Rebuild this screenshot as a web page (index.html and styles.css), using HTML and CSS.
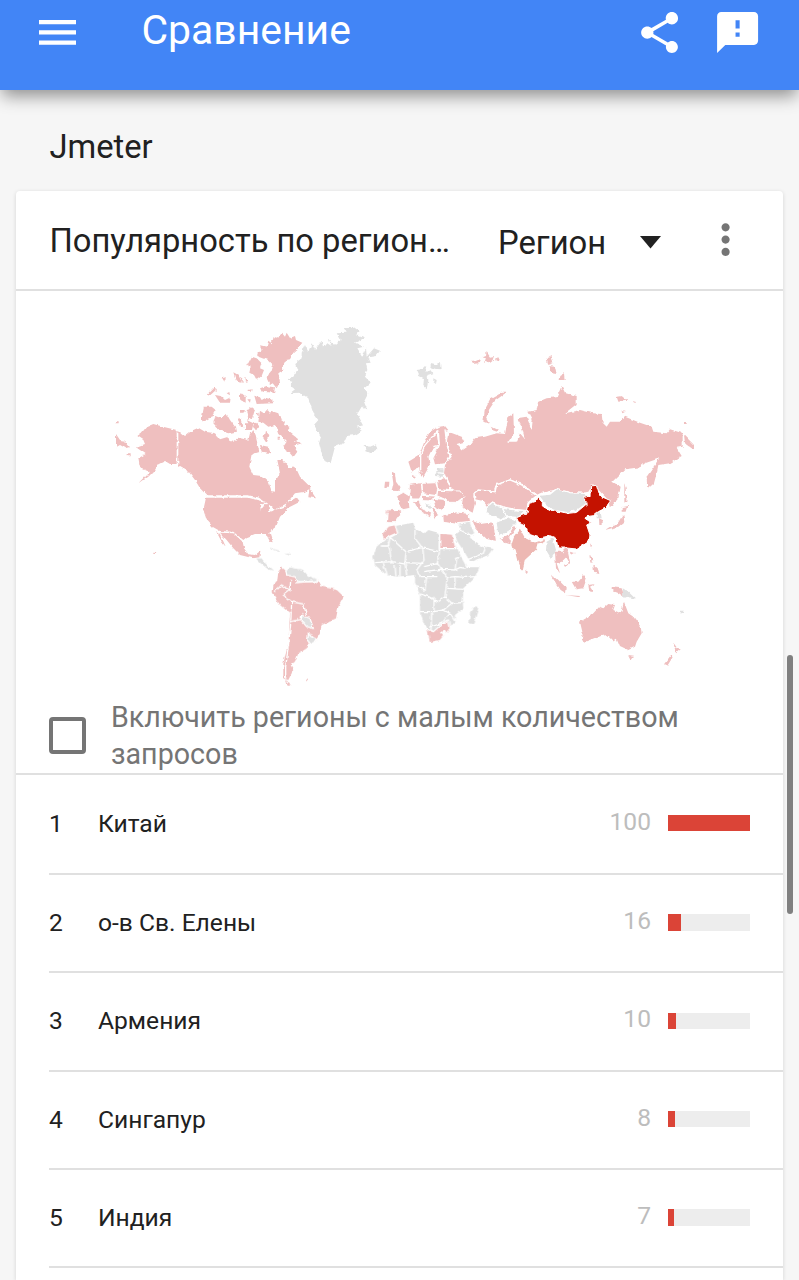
FILE: index.html
```html
<!DOCTYPE html>
<html lang="ru">
<head>
<meta charset="utf-8">
<title>Сравнение</title>
<link rel="stylesheet" href="styles.css">
</head>
<body>
<header class="appbar">
  <svg class="menu" viewBox="0 0 37 25"><path d="M0 0h37v4.2H0zM0 10.3h37v4.2H0zM0 20.6h37v4.2H0z"/></svg>
  <h1 class="title">Сравнение</h1>
  <svg class="action" viewBox="0 0 24 24"><path d="M18 16.08c-.76 0-1.44.3-1.96.77L8.91 12.7c.05-.23.09-.46.09-.7s-.04-.47-.09-.7l7.05-4.11c.54.5 1.25.81 2.04.81 1.66 0 3-1.34 3-3s-1.34-3-3-3-3 1.34-3 3c0 .24.04.47.09.7L8.04 9.81C7.5 9.31 6.79 9 6 9c-1.66 0-3 1.34-3 3s1.34 3 3 3c.79 0 1.5-.31 2.04-.81l7.12 4.16c-.05.21-.08.43-.08.65 0 1.61 1.31 2.92 2.92 2.92s2.92-1.31 2.92-2.92-1.31-2.92-2.92-2.92z"/></svg>
  <svg class="action feedback" viewBox="0 0 24 24"><path d="M20 2H4c-1.1 0-2 .9-2 2v18l4-4h14c1.1 0 2-.9 2-2V4c0-1.1-.9-2-2-2zm-7 8h-2V6h2v4zm0 4h-2v-2h2v2z"/></svg>
</header>
<main class="page">
  <h2 class="term">Jmeter</h2>
  <section class="card">
    <div class="card-head">
      <h3 class="card-title">Популярность по регион…</h3>
      <div class="select"><span>Регион</span><svg class="caret" viewBox="0 0 21 13"><path d="M0 0h21L10.500 12.500z"/></svg></div>
      <svg class="more" viewBox="0 0 24 24"><path d="M12 8c1.100 0 2-.9 2-2s-.9-2-2-2-2 .9-2 2 .9 2 2 2zm0 2c-1.100 0-2 .9-2 2s.9 2 2 2 2-.9 2-2-.9-2-2-2zm0 6c-1.100 0-2 .9-2 2s.9 2 2 2 2-.9 2-2-.9-2-2-2z"/></svg>
    </div>
    <svg class="map" viewBox="16 291 767 408">
      <defs><filter id="coast" x="0" y="0" width="100%" height="100%" color-interpolation-filters="sRGB"><feTurbulence type="fractalNoise" baseFrequency=".2" numOctaves="2" seed="4" result="n"/><feDisplacementMap in="SourceGraphic" in2="n" scale="3.500" xChannelSelector="R" yChannelSelector="G"/></filter></defs>
      <g filter="url(#coast)">
        <!-- North America -->
        <g class="low" transform="translate(100 310) scale(.33333)">
          <path d="M112 378L125 368 140 350 160 342 195 352 230 360V462L210 462 195 453 175 463 165 480 145 500 118 520 150 486 130 478 118 465 115 445 137 432 108 412 135 402 130 390zM48 372L60 390 75 392 90 412 78 415 60 405 48 412zM46 334h10v6h-10zM80 430h12v6h-12z"/>
          <path d="M235 362L255 378 275 362 295 353 315 365 345 370 360 388 385 380 390 400 415 383 445 390 450 370 465 370 472 400 478 425 455 432 448 470 460 495 485 498 505 515 515 543 525 545 525 515 540 490 532 450 550 450 570 475 585 468 600 500 625 525 632 535 615 545 585 550 560 580 590 562 600 575 575 588 550 600 560 580 525 600 505 582 480 563 445 556H320L300 535 285 510 262 480 235 465z"/>
          <path d="M318 563H445L480 572 498 575 480 583 483 605 492 583 505 582 508 605 550 592 575 582 560 600 540 620 528 650 508 665 518 697 510 695 498 672 465 672 440 682 430 690 415 678 400 665 360 663 340 652 320 630 310 600z"/>
          <path d="M360 668L400 670 428 695 432 715 445 733 465 735 482 722 478 742 460 745 420 735 400 715 380 690zM348 663L360 672 378 712 365 695z"/>
          <path d="M312 290L335 290 347 300 335 320 312 335 305 325zM345 318L365 325 380 312 390 330 405 350 408 365 385 370 360 362 340 340zM320 255L345 228 348 240 328 258zM345 255L362 258 375 270 392 262 390 278 360 278zM365 205L378 202 372 216zM400 187L415 195 425 215 408 212zM436 200L446 216 438 218zM420 250L437 260 432 275 420 268zM445 240L455 238 452 250zM442 268L452 268 450 278zM412 320L425 330 430 350 420 352zM440 300L462 295 460 315 445 315zM440 330L460 340 455 360zM420 300h14v8h-14z"/>
          <path d="M472 128L485 118 480 106 500 110 505 92 515 100 522 78 535 86 545 68 555 80 560 68 570 84 585 78 588 90 607 98 592 118 580 128 570 148 558 150 548 168 550 180 535 190 540 215 530 235 518 220 510 225 500 205 508 190 515 182 520 165 505 150 490 145 472 138zM455 140L470 145 485 160 480 175 492 180 485 198 470 210 462 195 448 188 452 170 442 165zM480 235L500 228 525 232 522 248 485 245zM463 257L480 262 485 270 500 262 517 265 518 280 470 282zM425 250L437 260 437 278 422 270zM420 200l10 5-3 12zM447 295L465 300 455 325 442 330zM480 302L492 310 500 300 510 312 512 302 535 310 540 325 555 335 552 345 572 350 562 362 575 372 592 385 582 392 605 400 580 408 592 425 580 442 570 430 560 425 550 410 560 395 550 385 535 372 525 345 505 350 490 338 475 335zM495 362L508 375 500 400 490 385zM480 405L505 410 512 430 485 425zM435 340h20v20h-20zM460 360L470 385 450 375zM463 335l12 14-6 12-10-10zM530 380h9v9h-9zM340 240l10-4v10zM380 250l8-4 2 10zM468 310l8-2v12z"/>
          <path d="M628 535L648 565 625 562zM160 728h6v4h-6z"/>
        </g>
        <!-- Greenland, Iceland and Svalbard -->
        <g class="none" transform="translate(240 310) scale(.33333)">
          <path d="M140 210L160 198 172 180 165 160 185 145 185 125 195 105 205 125 215 100 225 120 245 92 250 115 262 100 280 112 265 88 285 104 302 90 290 70 320 68 310 52 340 50 360 65 350 75 372 85 345 98 372 110 352 115 368 140 378 112 380 140 402 115 420 122 408 138 385 142 392 158 378 160 382 180 375 200 392 218 372 235 385 250 372 275 382 300 365 290 352 312 370 345 350 350 365 362 345 375 320 378 310 400 285 410 272 460 250 450 237 400 243 380 222 345 235 330 220 310 205 265 180 248 150 250 165 238 152 228 160 215z"/>
          <path d="M370 405L380 405 390 410 408 403 412 418 390 430 375 423 382 415z"/>
          <path d="M530 180L545 178 555 168 560 185 575 180 580 190 562 195 565 210 560 235 550 225 552 205 538 198zM572 162L585 165 600 156 602 178 585 176 572 172zM580 205l10 5-2 12-8-6z"/>
        </g>
        <!-- Caribbean and South America -->
        <g transform="translate(240 480) scale(.33333)">
          <path class="none" d="M48 235L65 235 80 255 100 272 85 268 60 248zM88 203L120 213 118 216 90 206zM132 220L150 222 148 226z"/>
          <path class="low" d="M125 262L138 272 200 290 235 300 245 320 290 330 312 350 295 380 288 415 245 435 240 460 225 485 205 490 200 505 175 520 165 545 152 555 160 570 145 600 130 595 130 550 145 490 150 400 120 375 98 340 100 315 112 300 115 275zM135 600L155 618 140 618zM198 596h6v4h-6z"/>
          <path class="none edge" d="M138 268L150 260 190 268 205 285 235 297 225 305 175 305 165 290 140 285zM185 405L210 415 220 445 200 440 183 420zM205 462L230 475 220 490 203 485z"/>
          <path class="line" d="M105 335L125 315 150 330 130 345 155 365 152 430 145 500 137 560 137 595M152 300L150 330M155 365L190 372 200 405M152 425L185 418M165 308L235 302"/>
        </g>
        <!-- Africa and Arabia -->
        <g transform="translate(360 480) scale(.33333)">
          <path class="none" d="M105 138L160 128 165 148 195 160 205 150 240 160 275 165 285 190 305 235 320 262 358 262 345 290 310 325 308 365 310 385 285 405 283 425 265 445 240 478 210 485 200 450 180 400 180 345 165 310 165 285 110 290 80 285 45 255 40 230 50 200 72 180 70 160 85 142zM348 378L355 385 340 432 328 430 330 400z"/>
          <path class="line" d="M62 198H85L90 172 138 215 185 203 238 215V160M85 185L95 245 45 248M112 160L90 172M165 150L165 175 188 205 192 240 170 270 180 290 235 290M138 218L135 248 190 250M95 245L135 252 140 285M70 250L82 285M105 255L108 290M120 255V290M240 206L232 250 245 268 285 270 290 235 302 232M192 260L235 250M192 275L245 268 262 292 285 290 320 292 345 290M285 270L300 262 320 265M262 292L255 350 235 365 205 350 180 342M200 290L195 330 170 320M262 325L310 328M222 350V395H180M222 395L250 390 275 370 308 368M255 350L275 370M250 390L270 400 285 425M215 400L213 450M215 440L245 430 270 400M285 290V325"/>
          <path class="low edge" d="M105 134L114 158 87 170 70 184 66 160 85 138zM239 159L277 162 288 206H239zM200 447L220 455 245 433 265 420 271 445 240 482 208 489z"/>
          <path class="white" d="M243 456l12-4 4 8-10 8z"/>
          <path class="none edge" d="M283 165L300 150 330 165 350 190 375 200 402 205 385 228 330 248 310 215 290 185zM292 133L330 125 345 160 335 167 305 152z"/>
          <path class="line" d="M325 238L370 220 378 200"/>
        </g>
        <!-- Europe and Russia -->
        <g transform="translate(370 330) scale(.33333)">
          <path class="low" d="M235 305L275 320 283 335 260 342 275 362 300 345 315 325 345 320 380 310 405 312 415 262 430 250 432 310 415 335 440 335 450 310 465 328 455 290 440 265 470 260 485 300 488 270 475 245 500 240 505 215 530 205 560 202 575 168 585 188 620 198 620 222 585 250 630 240 670 250 695 252 698 278 710 290 720 275 755 275 765 260 810 278 845 290 850 305 890 310 900 298 938 310V350L920 353 935 378 900 400 865 405 860 430 852 460 832 478 830 440 868 385 825 400 810 412 765 418 727 455 752 470 745 505 720 535 715 510 695 490 670 463 655 485 640 488 600 488 560 478 510 490 500 495 460 463 420 448 378 463 373 480 320 483 310 495 315 520 308 548 275 530 280 495 245 475 235 450 222 430 225 405 245 380 230 340z"/>
          <path class="low" d="M340 275L345 235 360 208 400 185 412 185 375 212 358 238 348 265 358 282zM365 290L385 300 375 305zM305 90L315 94 330 88 325 100 308 102zM335 82l10-4 2 8zM350 66L360 80 372 78 368 90 358 98 350 92 345 96zM375 86l10-4 4 8-10 6zM530 85L545 75 550 100 535 105zM535 108L555 110 560 132 545 130zM568 138L582 130 584 150 566 150zM740 200L755 198 772 212 745 215zM785 213L800 215 795 219zM755 240l10 3-8 4zM942 314L972 345 972 360 945 340zM942 276h8v6h-8z"/>
          <path class="low" d="M180 305L205 290 225 288 235 300 215 305 205 300 185 320 165 345 158 380 163 430 150 440 148 410 125 425 115 395 148 375 165 330zM185 320L200 310 205 345 185 360 175 380 180 405 160 440 155 430 150 380 165 345zM205 305L225 300 230 335 240 375 225 400 195 403 190 385 208 350z"/>
          <path class="line" d="M205 303L187 320 165 345 152 375 152 430M205 305L208 345 190 350M225 298L230 340 240 378"/>
          <path class="low" d="M65 425L75 430 78 455 92 475 85 483 65 482 70 460zM45 455L58 455 57 473 43 473zM128 435L137 438 132 448z"/>
          <path class="low rim" d="M48 540L90 538 92 555 75 578 50 578zM80 498L100 487 122 500 118 515 120 535 95 540 85 520zM118 463L154 458 157 490 148 507 123 507 117 485zM156 460L197 458 204 478 200 497 158 491zM200 453L225 443 241 470 230 481 203 479zM202 481L270 483 282 500 260 517 235 517 225 508 200 497zM188 505L222 508 227 525 215 542 195 532zM130 513L148 510 155 535 185 550 180 560 155 547 140 532zM155 496L197 498 187 513 158 512zM180 530L195 535 205 555 195 570 188 550zM218 555L260 546 297 550 302 577 255 582 220 577z"/>
          <path class="none" d="M202 415L220 415 222 440 195 438zM165 520l15 5 8 15-12-5z"/>
          <path class="line" d="M54 545L52 578M196 428L222 430"/>
        </g>
        <!-- Asia and Australia -->
        <g transform="translate(470 470) scale(.33333)">
          <path class="low edge" d="M12 70L25 60 75 65 80 45 120 30 155 45 200 77 175 98 170 122 135 118 95 110 65 98 50 110 38 95 15 90zM5 150L30 160 70 155 75 180 80 215 45 208 15 178zM85 205L115 195 130 165 142 172 120 205 130 228 105 220z"/>
          <path class="none rim" d="M48 112L65 100 95 112 110 140 95 150 45 130zM98 115L135 120 168 122 145 142 110 140zM78 157L115 143 142 155 115 188 85 197z"/>
          <path class="none edge" d="M205 76L240 72 260 56 300 68 345 70 357 95 320 122 290 128 245 120 225 102z"/>
          <path class="india edge" d="M125 235L122 225 132 195 150 172 165 200 195 215 228 205 225 218 205 222 200 240 167 270 160 300 153 300 145 280 135 240z"/>
          <path class="high rim" d="M140 143L170 130 178 100 195 95 202 81 217 97V108L240 122 270 125 295 130 320 127 352 100 340 83 360 78 362 48 380 46 390 78 422 92 405 115 385 125 370 137 350 140 345 145 364 158 350 165 360 195 350 217 320 237 290 234 264 234 258 205 240 197 210 204 175 192 165 165 145 155z"/>
          <path class="none" d="M230 215L248 205 258 240 243 265 228 240zM380 130L392 125 395 145 380 145z"/>
          <path class="low" d="M255 245L280 245 290 260 275 275 260 280 270 310 258 295zM280 235L292 238 300 275 285 295 282 285 295 275 283 255zM387 145L398 150 398 165 388 165zM405 180L420 170 440 165 455 140 460 135 463 155 445 170 425 175zM455 112L475 108 470 125 455 125zM463 40L467 50 468 85 474 90 463 98zM165 300L174 305 170 313zM360 220l6 8-3 8zM303 245l12 4-10 5zM358 255L368 265 362 280zM370 285L385 300 388 312 372 308zM243 317L260 325 290 355 288 370 272 360zM305 335L325 335 342 315 350 325 340 355 318 358zM288 375L330 378 328 382zM355 345L375 342 360 350 370 365 358 365zM425 352L455 355 462 380 440 365 425 360z"/>
          <path class="none" d="M458 355L475 365 498 388 475 380 460 383zM630 422h12v5h-12z"/>
          <path class="low" d="M330 455L365 435 388 410 400 415 415 402 435 405 430 420 452 430 462 395 475 430 490 440 512 470 515 490 500 515 495 530 475 540 450 528 440 505 428 512 410 495 380 502 345 515 335 510 338 490zM475 555L492 557 483 570zM610 518L620 532 632 538 618 550zM605 553L608 562 592 587 582 583z"/>
        </g>
      </g>
    </svg>
    <label class="option"><span class="box"></span><span class="option-text">Включить регионы с малым количеством запросов</span></label>
    <ol class="rows">
      <li class="row"><span class="rank">1</span><span class="name">Китай</span><span class="value">100</span><span class="track"><span class="fill" style="width:100%"></span></span></li>
      <li class="row"><span class="rank">2</span><span class="name">о-в Св. Елены</span><span class="value">16</span><span class="track"><span class="fill" style="width:16%"></span></span></li>
      <li class="row"><span class="rank">3</span><span class="name">Армения</span><span class="value">10</span><span class="track"><span class="fill" style="width:10%"></span></span></li>
      <li class="row"><span class="rank">4</span><span class="name">Сингапур</span><span class="value">8</span><span class="track"><span class="fill" style="width:8%"></span></span></li>
      <li class="row"><span class="rank">5</span><span class="name">Индия</span><span class="value">7</span><span class="track"><span class="fill" style="width:7%"></span></span></li>
    </ol>
  </section>
</main>
<div class="scrollbar"></div>
</body>
</html>
```
FILE: styles.css
```css
* { box-sizing: border-box; }
body { margin: 0; height: 1280px; display: flex; flex-direction: column; background: #f6f6f6; color: #212121; font-family: Roboto, "Liberation Sans", sans-serif; }
h1, h2, h3 { margin: 0; font-weight: 400; }
svg { display: block; flex: none; }
.appbar { display: flex; flex: none; align-items: flex-start; height: 89.500px; padding: 7.500px 37px 0 39px; background: #4285f6; fill: #fff; color: #fff; box-shadow: 0 8px 16px -2px rgba(0,0,0,.42); position: relative; }
.menu { width: 37px; height: 25px; margin-top: 12px; }
.title { flex: 1; margin-left: 65.500px; font-size: 40.900px; line-height: 48px; margin-top: -2px; }
.action { width: 49.200px; height: 49.200px; }
.feedback { margin-left: 28.500px; }
.page { flex: 1; min-height: 0; display: flex; flex-direction: column; padding: 0 16px; }
.term { flex: none; height: 101.500px; padding: 37px 33.500px 0; font-size: 32.700px; line-height: 40px; }
.card { flex: 1; min-height: 0; background: #fff; border-radius: 4px 4px 0 0; box-shadow: 0 1px 4px rgba(0,0,0,.14); }
.card-head { display: flex; align-items: center; height: 100px; padding: 0 33px 0 33.500px; border-bottom: 2px solid #e0e0e0; font-size: 32.800px; }
.card-title { width: 448.500px; padding-top: 1px; font-size: 32.700px; white-space: nowrap; }
.select { display: flex; align-items: center; gap: 34px; flex: 1; padding-top: 5px; white-space: nowrap; }
.caret { width: 21px; height: 13px; fill: #212121; }
.more { width: 49.200px; height: 49.200px; fill: #757575; }
.map { width: 767px; height: 408px; }
.low { fill: #efbfbf; }
.india { fill: #edb8b3; }
.none { fill: #e0e0e0; }
.high { fill: #c41200; }
.white { fill: #fff; }
.edge { stroke: #fff; stroke-width: 4; }
.rim { stroke: #fff; stroke-width: 3; }
.line { fill: none; stroke: #fff; stroke-width: 4; }
.option { display: flex; align-items: center; gap: 25px; height: 76px; padding-left: 33px; border-bottom: 2px solid #e0e0e0; color: #757575; font-size: 28.650px; line-height: 37px; }
.box { width: 37px; height: 37px; margin-bottom: 2px; border: 4px solid #757575; border-radius: 4px; flex: none; }
.option-text { width: 600px; }
.rows { list-style: none; margin: 0; padding: 0; }
.row { display: flex; align-items: center; height: 98.400px; margin-left: 33px; padding: 0 33px 1.500px 0; border-bottom: 2px solid #e0e0e0; font-size: 24.600px; }
.row:first-child { height: 99.900px; }
.rank { width: 49px; }
.name { flex: 1; }
.value { color: #bdbdbd; margin: -4px 17px 0 0; }
.track { width: 82px; height: 16.400px; background: #ededed; }
.fill { display: block; height: 100%; background: #db4437; }
.scrollbar { position: fixed; left: 786.500px; top: 655px; width: 6.500px; height: 259px; border-radius: 4px; background: #808080; }
```
